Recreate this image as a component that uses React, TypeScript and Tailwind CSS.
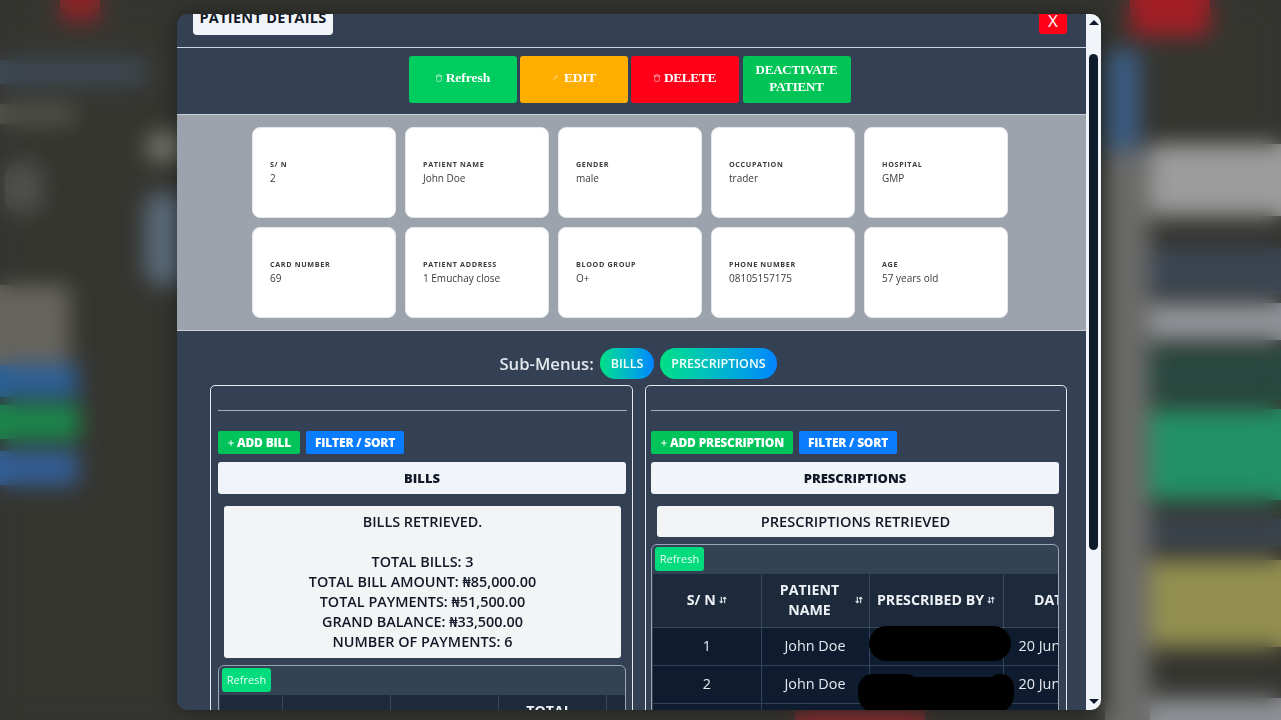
import React from "react";
import { Trash, Pencil, ArrowDownUp, Plus } from "lucide-react";

const sans = "font-['Open_Sans','Noto_Sans',sans-serif]";

function InfoCard({ label, value }: { label: string; value: string }) {
  return (
    <div className="h-[91px] w-[144px] rounded-[8px] border border-[#e5e7eb] bg-white pl-[17.5px] pt-[31px]">
      <div className="text-[7.2px] font-bold uppercase leading-[10px] tracking-[0.65px] text-[#3a3a3a]">{label}</div>
      <div className="mt-[2px] text-[10px] leading-[14px] text-[#3a3a3a]">{value}</div>
    </div>
  );
}

function ActionButton({ color, children }: { color: string; children: React.ReactNode }) {
  return (
    <div className={`${color} flex h-[47px] w-[108px] items-center justify-center gap-[3px] rounded-[3px] px-2 pb-[4px] text-center font-['Liberation_Serif',serif] text-[13.5px] font-bold leading-[17px] text-white`}>
      {children}
    </div>
  );
}

function Pill({ children }: { children: React.ReactNode }) {
  return (
    <div className="flex h-[31px] items-center rounded-full bg-gradient-to-r from-[#00e082] to-[#0a84ff] px-[11px] pt-[2px] text-[12.5px] font-semibold text-[#f4fffb]">
      {children}
    </div>
  );
}

function SmallBtn({ color, children }: { color: string; children: React.ReactNode }) {
  return (
    <div className={`${color} flex h-[23px] items-center rounded-[2px] px-[9px] text-[12px] font-extrabold tracking-[-0.2px] text-white`}>
      {children}
    </div>
  );
}

function RefreshBtn() {
  return (
    <div className="flex h-[24px] w-[49px] items-center justify-center rounded-[3px] bg-[#02dc7d] text-[11px] text-[#eafff5]">
      Refresh
    </div>
  );
}

function Sort() {
  return <ArrowDownUp size={8} strokeWidth={3.5} className="shrink-0 text-[#d9dee6]" />;
}

function Th({ w, children, sort = true }: { w: string; children: React.ReactNode; sort?: boolean }) {
  return (
    <th className={`${w} border-r border-b border-[#3a4a5e] bg-[#1c2a3c] p-0 text-center text-[14.2px] font-bold leading-[20px] text-[#eef2f6]`}>
      <div className="flex items-center justify-center gap-[3px] px-[6px]">
        <span>{children}</span>
        {sort && <Sort />}
      </div>
    </th>
  );
}

function Td({ children }: { children?: React.ReactNode }) {
  return (
    <td className="h-[38px] overflow-hidden whitespace-nowrap border-r border-b border-[#33445a] bg-[#0f1c30] p-0 text-center text-[14.4px] text-[#e6eaf0]">
      {children}
    </td>
  );
}

export default function App() {
  return (
    <div className={`relative h-[720px] w-[1281px] overflow-hidden bg-[#353530] ${sans}`}>
      {/* page behind the dialog */}
      <div className="flex h-full w-full">
        <div className="flex w-[145px] shrink-0 flex-col">
          <div className="ml-[60px] h-[22px] w-[40px] rounded-b-md bg-[#8c2428]" />
          <div className="mt-[38px] h-[24px] w-[145px] bg-[#3f4b57]" />
          <div className="mt-[20px] h-[20px] w-[75px] bg-[#55554f]" />
          <div className="ml-[5px] mt-[36px] h-[55px] w-[38px] rounded-full bg-[#50504c]" />
          <div className="mt-[70px] h-[80px] w-[70px] bg-[#66645e]" />
          <div className="h-[32px] w-[78px] bg-[#2a6099]" />
          <div className="mt-[8px] h-[34px] w-[80px] bg-[#1a8a4c]" />
          <div className="mt-[12px] h-[34px] w-[78px] bg-[#33609a]" />
        </div>
        <div className="flex w-[960px] shrink-0 flex-col">
          <div className="mt-[133px] h-[28px] w-[40px] rounded-l-full bg-[#77776f]" />
          <div className="mt-[32px] h-[92px] w-[40px] rounded-l-2xl bg-[#5a6b7a]" />
          <div className="ml-[650px] mt-[425px] h-[10px] w-[130px] bg-[#8c2c30]" />
        </div>
        <div className="flex w-[45px] shrink-0 flex-col">
          <div className="mt-[50px] h-[100px] w-[35px] bg-[#3b5c82]" />
          <div className="h-[570px] w-[45px] bg-[#6a6a68]" />
        </div>
        <div className="flex min-w-0 flex-1 flex-col">
          <div className="-ml-[20px] h-[36px] w-[80px] rounded-b-md bg-[#a11f26]" />
          <div className="mt-[108px] h-[72px] bg-[#9c9c9c]" />
          <div className="mt-[32px] h-[46px] bg-[#3b4552]" />
          <div className="mt-[9px] h-[37px] bg-[#92959a]" />
          <div className="mt-[9px] h-[51px] bg-[#27483f]" />
          <div className="mt-[9px] h-[91px] bg-[#229068]" />
          <div className="mt-[19px] h-[27px] bg-[#3b4550]" />
          <div className="mt-[14px] h-[87px] bg-[#928f50]" />
          <div className="mt-[51px] h-[22px] bg-[#8e9196]" />
        </div>
      </div>

      {/* dialog overlay */}
      <div className="absolute inset-0 pl-[177px] pt-[14px] backdrop-blur-[11px]">
        <div className="flex h-[696px] w-[924px] overflow-hidden rounded-[10px] shadow-[0_0_20px_rgba(0,0,0,0.4)]">
          <div className="h-full w-[909px] shrink-0 overflow-hidden bg-[#344054]">
            {/* header */}
            <div className="relative flex h-[34px] items-end border-b border-[#cbd5e1] pl-[16px]">
              <div className="mb-[12px] flex h-[36px] w-[140px] items-end justify-center rounded-[4px] bg-[#f1f5f9] pb-[8px] text-[14.5px] font-bold leading-[18px] tracking-[0.3px] text-[#111827]">
                PATIENT DETAILS
              </div>
              <div className="absolute right-[19px] top-[-6px] flex h-[26px] w-[28px] items-end justify-center rounded-[3px] bg-[#ff0018] pb-[3px] text-[17px] leading-[20px] text-white">
                X
              </div>
            </div>

            {/* actions */}
            <div className="flex h-[66px] items-start justify-center gap-[3px] pr-[4px] pt-[8px]">
              <ActionButton color="bg-[#00cc5f]"><Trash size={8} className="opacity-80" />Refresh</ActionButton>
              <ActionButton color="bg-[#ffae00]"><Pencil size={5} className="ml-[2px] mr-[3px] opacity-80" /><span className="tracking-[-0.2px]">EDIT</span></ActionButton>
              <ActionButton color="bg-[#ff0018]"><Trash size={8} className="opacity-80" /><span className="tracking-[-0.5px]">DELETE</span></ActionButton>
              <ActionButton color="ml-[1px] bg-[#00c455]"><span className="text-[13px] tracking-[-0.2px]">DEACTIVATE PATIENT</span></ActionButton>
            </div>

            {/* info grid */}
            <div className="flex h-[217px] flex-col items-center justify-center gap-[9px] border-y border-[#cbd0d6] bg-[#9ca3ad] pr-[4px]">
              <div className="flex gap-[9px]">
                <InfoCard label="S/ N" value="2" />
                <InfoCard label="Patient Name" value="John Doe" />
                <InfoCard label="Gender" value="male" />
                <InfoCard label="Occupation" value="trader" />
                <InfoCard label="Hospital" value="GMP" />
              </div>
              <div className="flex gap-[9px]">
                <InfoCard label="Card Number" value="69" />
                <InfoCard label="Patient Address" value="1 Emuchay close" />
                <InfoCard label="Blood Group" value="O+" />
                <InfoCard label="Phone Number" value="08105157175" />
                <InfoCard label="Age" value="57 years old" />
              </div>
            </div>

            {/* sub menus */}
            <div className="mt-[17px] flex h-[31px] items-center justify-center gap-[6px] pl-[13px]">
              <span className="text-[16.7px] font-semibold text-[#e5e9ef]">Sub-Menus:</span>
              <Pill>BILLS</Pill>
              <Pill>PRESCRIPTIONS</Pill>
            </div>

            {/* panels */}
            <div className="ml-[33px] mt-[6px] flex gap-[12px]">
              {/* bills */}
              <div className="h-[400px] w-[423px] shrink-0 rounded-[5px] border border-[#e5e9ef] px-[7px]">
                <div className="mt-[24px] h-px w-[409px] bg-[#a4aebb]" />
                <div className="mt-[20px] flex gap-[6px]">
                  <SmallBtn color="bg-[#00c45a]"><Plus size={8} strokeWidth={3} className="mr-[2px]" />ADD BILL</SmallBtn>
                  <SmallBtn color="bg-[#0a7cff]">FILTER / SORT</SmallBtn>
                </div>
                <div className="mt-[8px] flex h-[32px] w-[408px] items-center justify-center rounded-[3px] bg-[#f1f5f9] pt-[2px] text-[13px] font-extrabold text-[#111827]">
                  BILLS
                </div>
                <div className="ml-[6px] mt-[12px] flex h-[152px] w-[397px] flex-col rounded-[3px] bg-[#f3f4f6] pt-[6px] text-center text-[14.4px] font-semibold leading-[20px] text-[#111827]">
                  <div>BILLS RETRIEVED.</div>
                  <div className="mt-[20px]">TOTAL BILLS: 3</div>
                  <div>TOTAL BILL AMOUNT: ₦85,000.00</div>
                  <div>TOTAL PAYMENTS: ₦51,500.00</div>
                  <div>GRAND BALANCE: ₦33,500.00</div>
                  <div>NUMBER OF PAYMENTS: 6</div>
                </div>
                <div className="mt-[7px] w-[408px] overflow-hidden rounded-t-[6px] border border-[#9aa7b8] bg-[#344256]">
                  <div className="px-[3px] pb-[3px] pt-[2px]"><RefreshBtn /></div>
                  <table className="ml-[1px] w-[406px] table-fixed border-collapse">
                    <thead>
                      <tr className="h-[53px] align-top">
                        <Th w="w-[62px]" sort={false}> </Th>
                        <Th w="w-[108px]" sort={false}> </Th>
                        <Th w="w-[108px]" sort={false}> </Th>
                        <Th w="w-[108px]" sort={false}><span className="block pr-[6px] pt-[6px]">TOTAL</span></Th>
                        <Th w="w-[20px]" sort={false}> </Th>
                      </tr>
                    </thead>
                  </table>
                </div>
              </div>

              {/* prescriptions */}
              <div className="h-[400px] w-[422px] shrink-0 rounded-[5px] border border-[#e5e9ef] px-[5px]">
                <div className="mt-[24px] h-px w-[409px] bg-[#a4aebb]" />
                <div className="mt-[20px] flex gap-[6px]">
                  <SmallBtn color="bg-[#00c45a]"><Plus size={8} strokeWidth={3} className="mr-[2px]" />ADD PRESCRIPTION</SmallBtn>
                  <SmallBtn color="bg-[#0a7cff]">FILTER / SORT</SmallBtn>
                </div>
                <div className="mt-[8px] flex h-[32px] w-[408px] items-center justify-center rounded-[3px] bg-[#f1f5f9] pt-[2px] text-[13px] font-extrabold text-[#111827]">
                  PRESCRIPTIONS
                </div>
                <div className="ml-[6px] mt-[12px] flex h-[31px] w-[397px] items-center justify-center rounded-[3px] bg-[#f3f4f6] text-[14.6px] font-semibold text-[#111827]">
                  PRESCRIPTIONS RETRIEVED
                </div>
                <div className="mt-[7px] w-[408px] overflow-hidden rounded-t-[6px] border border-[#9aa7b8] bg-[#344256]">
                  <div className="px-[3px] pb-[3px] pt-[2px]"><RefreshBtn /></div>
                  <div className="relative overflow-hidden">
                    <table className="ml-[1px] w-[480px] table-fixed border-collapse">
                      <thead>
                        <tr className="h-[53px]">
                          <Th w="w-[108px]">S/ N</Th>
                          <Th w="w-[108px]">PATIENT NAME</Th>
                          <Th w="w-[134px]">PRESCRIBED BY</Th>
                          <Th w="w-[130px]" sort={false}>
                            <span className="block w-[120px] pl-[26px] text-left">DATE</span>
                          </Th>
                        </tr>
                      </thead>
                      <tbody>
                        <tr>
                          <Td>1</Td>
                          <Td>John Doe</Td>
                          <Td />
                          <Td><span className="block pl-[15px] text-left">20 Jun 2024</span></Td>
                        </tr>
                        <tr>
                          <Td>2</Td>
                          <Td>John Doe</Td>
                          <Td />
                          <Td><span className="block pl-[15px] text-left">20 Jun 2024</span></Td>
                        </tr>
                        <tr>
                          <Td>3</Td>
                          <Td>John Doe</Td>
                          <Td />
                          <Td />
                        </tr>
                      </tbody>
                    </table>
                    {/* redaction marks painted on the picture */}
                    <div className="absolute left-[217px] top-[52px] h-[35px] w-[142px] rounded-[18px] bg-black" />
                    <div className="absolute left-[206px] top-[103px] h-[36px] w-[156px] rounded-[18px] bg-black" />
                    <div className="absolute left-[206px] top-[100px] h-[30px] w-[62px] rounded-[15px] bg-black" />
                    <div className="absolute left-[335px] top-[100px] h-[30px] w-[27px] rounded-[13px] bg-black" />
                  </div>
                </div>
              </div>
            </div>
          </div>

          {/* scrollbar */}
          <div className="flex h-full w-[15px] shrink-0 flex-col items-center bg-[#f1f5f9]">
            <div className="mt-[6px] h-0 w-0 border-x-[5px] border-b-[5px] border-x-transparent border-b-[#0f172a]" />
            <div className="mt-[29px] h-[496px] w-[9px] rounded-full bg-[#0f1c2e]" />
            <div className="mb-[6px] mt-auto h-0 w-0 border-x-[5px] border-t-[5px] border-x-transparent border-t-[#0f172a]" />
          </div>
        </div>
      </div>
    </div>
  );
}
